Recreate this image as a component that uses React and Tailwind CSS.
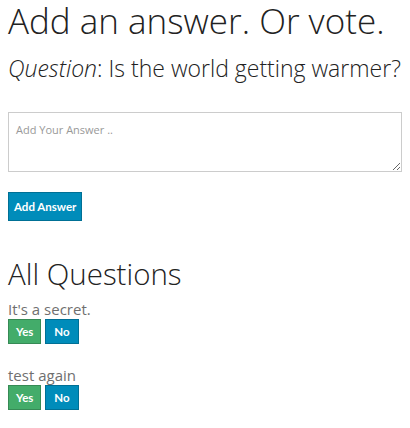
import React from 'react';

const font = { fontFamily: '"Open Sans", "Liberation Sans", sans-serif' };
const btnFont = { fontFamily: 'Lato, "Open Sans", sans-serif' };

function VoteButtons() {
  return (
    <div className="flex gap-1" style={btnFont}>
      <button className="h-[25px] px-[7px] bg-[#43ac6a] border border-[#368a55] text-white text-[11.5px] font-bold">Yes</button>
      <button className="h-[25px] px-[8px] bg-[#008cba] border border-[#007095] text-white text-[11.5px] font-bold">No</button>
    </div>
  );
}

export default function App() {
  const questions = ["It's a secret.", 'test again'];
  return (
    <div className="bg-white text-[#222] px-2 min-h-screen" style={font}>
      <h1 className="text-[35px] font-light leading-[40px] pt-[1px]">Add an answer. Or vote.</h1>
      <h3 className="text-[23px] font-light leading-[30px] mt-[12px] whitespace-nowrap">
        <em>Question</em>: Is the world getting warmer?
      </h3>
      <textarea
        placeholder="Add Your Answer .."
        className="block w-full h-[60px] mt-[29px] border border-[#ccc] px-[7px] pt-[9px] text-[11px] placeholder:text-[#999] outline-none resize-y"
      />
      <button
        className="mt-[20px] h-[29px] px-[5px] bg-[#008cba] border border-[#007095] text-white text-[11.5px] font-bold"
        style={btnFont}
      >
        Add Answer
      </button>
      <h2 className="text-[29.5px] font-light leading-[36px] mt-[35px]">All Questions</h2>
      <div className="flex flex-col gap-[22px] mt-[8px]">
        {questions.map((q) => (
          <div key={q}>
            <p className="text-[15px] text-[#6f6f6f] leading-[19px]">{q}</p>
            <VoteButtons />
          </div>
        ))}
      </div>
    </div>
  );
}
